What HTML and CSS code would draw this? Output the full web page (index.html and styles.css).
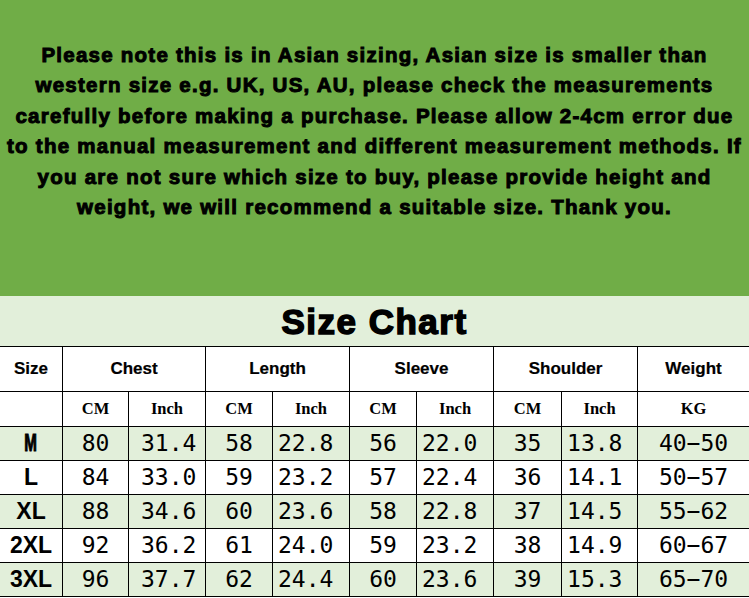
FILE: index.html
```html
<!DOCTYPE html>
<html>
<head>
<meta charset="utf-8">
<link rel="stylesheet" href="styles.css">
</head>
<body>
<div class="page">
  <section class="notice">
    <p>Please note this is in Asian sizing, Asian size is smaller than<br>western size e.g. UK, US, AU, please check the measurements<br>carefully before making a purchase. Please allow 2-4cm error due<br>to the manual measurement and different measurement methods. If<br>you are not sure which size to buy, please provide height and<br>weight, we will recommend a suitable size. Thank you.</p>
  </section>
  <div class="title">Size Chart</div>
  <table class="chart">
    <colgroup>
      <col class="c-size"><col class="c-cm"><col class="c-in"><col class="c-cm2"><col class="c-in"><col class="c-cm2"><col class="c-in"><col class="c-cm3"><col class="c-in2"><col class="c-w">
    </colgroup>
    <tr class="head">
      <th>Size</th><th colspan="2">Chest</th><th colspan="2">Length</th><th colspan="2">Sleeve</th><th colspan="2">Shoulder</th><th>Weight</th>
    </tr>
    <tr class="sub">
      <td></td><td>CM</td><td>Inch</td><td>CM</td><td>Inch</td><td>CM</td><td>Inch</td><td>CM</td><td>Inch</td><td>KG</td>
    </tr>
    <tr class="row tint">
      <td class="sz"><span class="narrow">M</span></td><td>80</td><td class="in first">31.4</td><td>58</td><td class="in">22.8</td><td>56</td><td class="in">22.0</td><td>35</td><td class="in">13.8</td><td>40−50</td>
    </tr>
    <tr class="row">
      <td class="sz">L</td><td>84</td><td class="in first">33.0</td><td>59</td><td class="in">23.2</td><td>57</td><td class="in">22.4</td><td>36</td><td class="in">14.1</td><td>50−57</td>
    </tr>
    <tr class="row tint">
      <td class="sz">XL</td><td>88</td><td class="in first">34.6</td><td>60</td><td class="in">23.6</td><td>58</td><td class="in">22.8</td><td>37</td><td class="in">14.5</td><td>55−62</td>
    </tr>
    <tr class="row">
      <td class="sz">2XL</td><td>92</td><td class="in first">36.2</td><td>61</td><td class="in">24.0</td><td>59</td><td class="in">23.2</td><td>38</td><td class="in">14.9</td><td>60−67</td>
    </tr>
    <tr class="row tint">
      <td class="sz">3XL</td><td>96</td><td class="in first">37.7</td><td>62</td><td class="in">24.4</td><td>60</td><td class="in">23.6</td><td>39</td><td class="in">15.3</td><td>65−70</td>
    </tr>
  </table>
</div>
</body>
</html>
```
FILE: styles.css
```css
html, body {
  margin: 0;
  padding: 0;
  background: #ffffff;
}
.page {
  width: 749px;
  height: 598px;
  overflow: hidden;
}
.notice {
  background: #70ad47;
  height: 296px;
  box-sizing: border-box;
  padding-top: 39.5px;
}
.notice p {
  margin: 0;
  text-align: center;
  white-space: nowrap;
  font-family: "Liberation Sans", Arial, sans-serif;
  font-weight: 700;
  font-size: 20.5px;
  line-height: 30.6px;
  color: #000;
  -webkit-text-stroke: 1px #000;
  letter-spacing: 1.25px;
}
.title {
  background: #e2efda;
  height: 50px;
  text-align: center;
  font-family: "Liberation Sans", Arial, sans-serif;
  font-weight: 700;
  font-size: 35px;
  line-height: 52px;
  -webkit-text-stroke: 1.5px #000;
  letter-spacing: 1.5px;
  color: #000;
}
.chart {
  border-collapse: collapse;
  table-layout: fixed;
  width: 751px;
  margin-left: -1px;
}
.chart td, .chart th {
  border: 1px solid #000;
  padding: 0;
  text-align: center;
  color: #000;
}
.c-size { width: 63px; }
.c-cm { width: 66px; }
.c-in { width: 77px; }
.c-cm2 { width: 67px; }
.c-cm3 { width: 68px; }
.c-in2 { width: 76px; }
.c-w { width: 112px; }
.head th {
  height: 44px;
  font-family: "Liberation Sans", Arial, sans-serif;
  font-weight: 700;
  font-size: 17px;
  -webkit-text-stroke: 0.2px #000;
}
.sub td {
  height: 34px;
  font-family: "Liberation Serif", "Times New Roman", serif;
  font-weight: 700;
  font-size: 16.5px;
}
.row td {
  height: 33px;
  font-family: "DejaVu Sans Mono", monospace;
  font-size: 23px;
  line-height: 1;
}
.row td.in {
  text-align: left;
  padding-left: 5px;
}
.row td.in.first {
  padding-left: 12px;
}
.row td.sz {
  font-family: "Liberation Sans", Arial, sans-serif;
  font-weight: 700;
  font-size: 23px;
}
.narrow {
  display: inline-block;
  transform: scaleX(0.66);
  -webkit-text-stroke: 1px #000;
}
.tint td {
  background: #e2efda;
}
```
